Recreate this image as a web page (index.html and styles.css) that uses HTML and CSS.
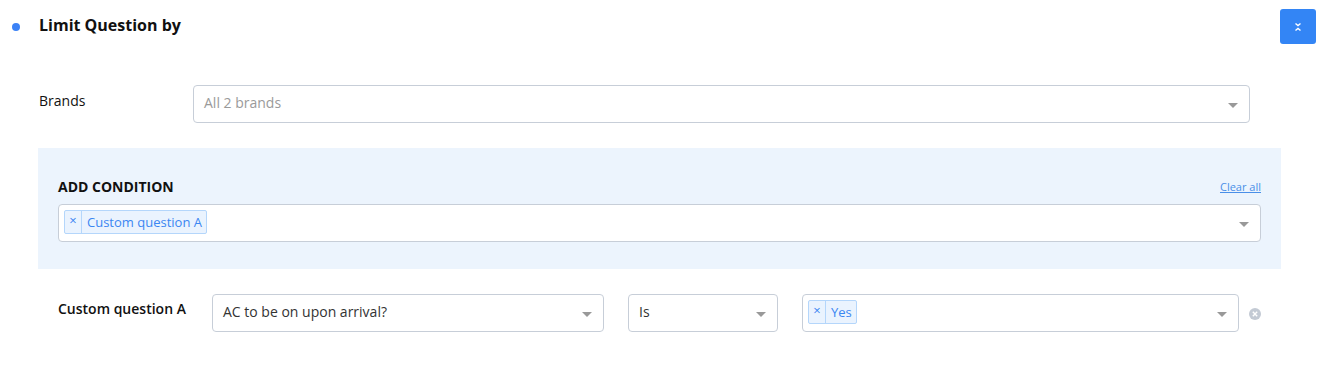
FILE: index.html
```html
<!DOCTYPE html>
<html lang="en">
<head>
    <meta charset="UTF-8">
    <title>Limit Question by</title>
    <link rel="stylesheet" href="styles.css">
</head>
<body>
    <div class="header">
        <span class="dot"></span>
        <h3 class="title">Limit Question by</h3>
        <button class="collapse-btn" type="button">
            <svg width="8" height="10" viewBox="0 0 8 10">
                <path d="M1.5 1.5 L4 3.5 L6.5 1.5" fill="none" stroke="#fff" stroke-width="1.4"/>
                <path d="M1.5 8.5 L4 6.5 L6.5 8.5" fill="none" stroke="#fff" stroke-width="1.4"/>
            </svg>
        </button>
    </div>

    <div class="field-row brands-row">
        <label class="field-label">Brands</label>
        <div class="select brands-select">
            <span class="placeholder">All 2 brands</span>
            <span class="caret"></span>
        </div>
    </div>

    <div class="condition-panel">
        <div class="panel-head">
            <span class="panel-title">ADD CONDITION</span>
            <a class="clear-all" href="#">Clear all</a>
        </div>
        <div class="select">
            <span class="tag"><span class="tag-x">×</span><span class="tag-text">Custom question A</span></span>
            <span class="caret"></span>
        </div>
    </div>

    <div class="field-row condition-row">
        <label class="field-label strong">Custom question A</label>
        <div class="select question-select">
            <span class="value">AC to be on upon arrival?</span>
            <span class="caret"></span>
        </div>
        <div class="select operator-select">
            <span class="value">Is</span>
            <span class="caret"></span>
        </div>
        <div class="select answer-select">
            <span class="tag"><span class="tag-x">×</span><span class="tag-text">Yes</span></span>
            <span class="caret"></span>
        </div>
        <span class="remove-btn">
            <svg width="12" height="12" viewBox="0 0 12 12">
                <circle cx="6" cy="6" r="6" fill="#c3cad4"/>
                <path d="M3.8 3.8 L8.2 8.2 M8.2 3.8 L3.8 8.2" stroke="#fff" stroke-width="1.4"/>
            </svg>
        </span>
    </div>
</body>
</html>
```

FILE: styles.css
```css
body {
    margin: 0;
    font-family: "Open Sans", Arial, sans-serif;
    font-size: 14px;
    color: #222;
    background: #fff;
}
.header {
    display: flex;
    align-items: center;
    height: 52px;
    padding: 0 18px 0 12px;
}
.dot {
    width: 8px;
    height: 8px;
    border-radius: 50%;
    background: #3b82f6;
    margin-top: 2px;
}
.title {
    margin: -2px 0 0 19px;
    font-size: 16px;
    font-weight: 700;
    color: #111;
    flex: 1;
}
.collapse-btn {
    width: 36px;
    height: 35px;
    margin-top: 1px;
    border: none;
    border-radius: 3px;
    background: #3385f5;
    display: flex;
    align-items: center;
    justify-content: center;
    padding: 0;
}
.field-row {
    display: flex;
    align-items: center;
}
.brands-row {
    margin-top: 33px;
    padding-left: 39px;
    padding-right: 84px;
}
.brands-row .field-label {
    width: 154px;
    margin-top: -8px;
}
.field-label {
    font-size: 14px;
    color: #111;
}
.field-label.strong {
    font-weight: 600;
    width: 154px;
    margin-top: -10px;
}
.select {
    position: relative;
    display: flex;
    align-items: center;
    height: 38px;
    box-sizing: border-box;
    border: 1px solid #c7ced8;
    border-radius: 4px;
    background: #fff;
    padding: 0 30px 0 10px;
    flex: 1;
}
.brands-select {
    padding-bottom: 3px;
}
.placeholder {
    color: #9a9a9a;
}
.value {
    color: #333;
}
.caret {
    position: absolute;
    right: 11px;
    top: 17px;
    width: 0;
    height: 0;
    border-left: 5px solid transparent;
    border-right: 5px solid transparent;
    border-top: 5px solid #999;
}
.condition-panel {
    margin: 25px 53px 0 38px;
    padding: 29px 20px 27px 20px;
    background: #ecf4fd;
}
.panel-head {
    display: flex;
    justify-content: space-between;
    align-items: center;
    margin-bottom: 8px;
}
.panel-title {
    font-size: 14px;
    font-weight: 700;
    color: #111;
}
.clear-all {
    font-size: 11px;
    color: #4a8fe8;
    text-decoration: underline;
}
.condition-panel .select {
    padding-left: 5px;
    padding-bottom: 2px;
}
.tag {
    display: inline-flex;
    align-items: stretch;
    height: 24px;
    box-sizing: border-box;
    border: 1px solid #b4d6fb;
    border-radius: 2px;
    background: #eaf3fe;
    color: #3b86f2;
    font-size: 13px;
}
.tag-x {
    display: flex;
    align-items: center;
    justify-content: center;
    width: 17px;
    border-right: 1px solid #b4d6fb;
    font-size: 13px;
    line-height: 1;
    padding-bottom: 3px;
    box-sizing: border-box;
}
.tag-text {
    display: flex;
    align-items: center;
    padding: 0 4px 0 5px;
}
.condition-row {
    margin-top: 25px;
    padding-left: 58px;
    padding-right: 73px;
}
.condition-row .select {
    padding-bottom: 3px;
}
.question-select {
    flex: 0 0 392px;
}
.operator-select {
    flex: 0 0 150px;
    margin-left: 24px;
}
.condition-row .answer-select {
    margin-left: 24px;
    padding-left: 5px;
}
.remove-btn {
    display: flex;
    margin-left: 10px;
    margin-top: 2px;
}
```
